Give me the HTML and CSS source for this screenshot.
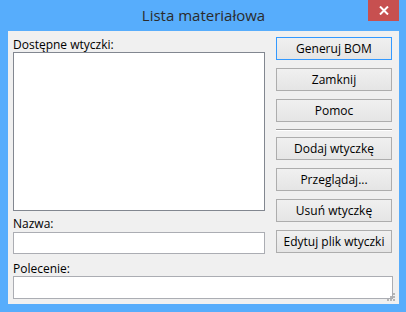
FILE: index.html
```html
<!DOCTYPE html>
<html lang="pl">
<head>
    <meta charset="UTF-8">
    <title>Lista materiałowa</title>
    <link rel="stylesheet" href="styles.css">
</head>
<body>
    <div class="window">
        <div class="titlebar">
            <span class="title">Lista materiałowa</span>
            <button class="close" title="Zamknij">
                <svg width="10" height="9" viewBox="0 0 10 9">
                    <path d="M1 0.5 L9 8.5 M9 0.5 L1 8.5" stroke="#fff" stroke-width="2"/>
                </svg>
            </button>
        </div>
        <div class="client">
            <div class="main">
                <div class="left">
                    <label class="lbl" for="lista">Dostępne wtyczki:</label>
                    <div class="listbox" id="lista"></div>
                    <label class="lbl lbl-name" for="nazwa">Nazwa:</label>
                    <input class="field" type="text" id="nazwa">
                </div>
                <div class="buttons">
                    <button class="btn default">Generuj BOM</button>
                    <button class="btn">Zamknij</button>
                    <button class="btn">Pomoc</button>
                    <div class="sep"></div>
                    <button class="btn">Dodaj wtyczkę</button>
                    <button class="btn">Przeglądaj...</button>
                    <button class="btn">Usuń wtyczkę</button>
                    <button class="btn">Edytuj plik wtyczki</button>
                </div>
            </div>
            <label class="lbl lbl-cmd" for="polecenie">Polecenie:</label>
            <textarea class="command" id="polecenie"></textarea>
            <span class="grip">
                <svg width="9" height="9" viewBox="0 0 9 9" fill="#b5b5b5">
                    <rect x="6" y="0" width="2" height="2"/>
                    <rect x="3" y="3" width="2" height="2"/>
                    <rect x="6" y="3" width="2" height="2"/>
                    <rect x="0" y="6" width="2" height="2"/>
                    <rect x="3" y="6" width="2" height="2"/>
                    <rect x="6" y="6" width="2" height="2"/>
                </svg>
            </span>
        </div>
    </div>
</body>
</html>
```

FILE: styles.css
```css
body {
    margin: 0;
    font-family: "Open Sans", "Noto Sans", sans-serif;
    font-size: 12px;
    color: #000;
}
.window {
    width: 406px;
    height: 312px;
    background-color: #57adfc;
    box-sizing: border-box;
    padding: 0 7px 8px 8px;
}
.titlebar {
    display: grid;
    grid-template-columns: 31px 1fr 31px;
    height: 31px;
}
.title {
    grid-column: 2;
    text-align: center;
    font-size: 15px;
    line-height: 30px;
    color: #2b2b2b;
}
.close {
    grid-column: 3;
    width: 31px;
    height: 21px;
    border: none;
    padding: 0;
    background-color: #c75050;
    display: flex;
    justify-content: center;
    align-items: center;
}
.client {
    position: relative;
    height: 273px;
    box-sizing: border-box;
    background-color: #f0f0f0;
    padding: 6px 7px 0 5px;
}
.main {
    display: flex;
    gap: 11px;
}
.left {
    width: 252px;
    display: flex;
    flex-direction: column;
}
.lbl {
    display: block;
    height: 15px;
    line-height: 15px;
}
.lbl-name {
    margin-top: 5px;
    margin-bottom: 1px;
}
.lbl-cmd {
    margin-top: 7px;
}
.listbox {
    height: 159px;
    box-sizing: border-box;
    background-color: #fff;
    border: 1px solid #828790;
}
.field, .command {
    display: block;
    box-sizing: border-box;
    background-color: #fff;
    border: 1px solid #abadb3;
    margin: 0;
    font: inherit;
    resize: none;
}
.field {
    width: 252px;
    height: 22px;
}
.command {
    width: 380px;
    height: 23px;
}
.buttons {
    width: 116px;
    display: flex;
    flex-direction: column;
    gap: 8px;
}
.btn {
    height: 23px;
    box-sizing: border-box;
    border: 1px solid #adadad;
    background: linear-gradient(#f0f0f0, #e5e5e5);
    font: inherit;
    color: #000;
    padding: 0;
}
.btn.default {
    border-color: #3399ff;
}
.sep {
    height: 1px;
    background-color: #a0a0a0;
    border-bottom: 1px solid #fff;
    margin: -1px 0 -2px 0;
}
.grip {
    position: absolute;
    right: 3px;
    bottom: 2px;
    line-height: 0;
}
```
